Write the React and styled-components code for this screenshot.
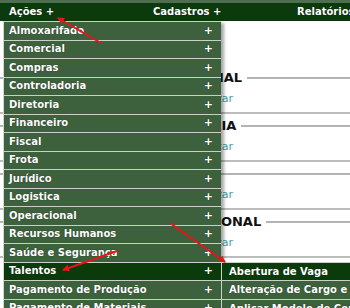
import styled, { createGlobalStyle } from "styled-components";

const GlobalStyle = createGlobalStyle`
  html, body {
    margin: 0;
    padding: 0;
    background: #ffffff;
  }
  body {
    width: 350px;
    height: 308px;
    overflow: hidden;
    font-family: "DejaVu Sans", Verdana, sans-serif;
  }
`;

const menuItems = [
  "Almoxarifado",
  "Comercial",
  "Compras",
  "Controladoria",
  "Diretoria",
  "Financeiro",
  "Fiscal",
  "Frota",
  "Jurídico",
  "Logistica",
  "Operacional",
  "Recursos Humanos",
  "Saúde e Segurança",
  "Talentos",
  "Pagamento de Produção",
  "Pagamento de Materiais",
];

const subItems = [
  "Abertura de Vaga",
  "Alteração de Cargo e Salário",
  "Aplicar Modelo de Competências",
];

const sections = ["COMERCIAL", "DIRETORIA", "FISCAL", "OPERACIONAL"];

const Page = styled.div`
  position: relative;
  width: 350px;
  height: 308px;
  overflow: hidden;
`;

const TopStrip = styled.div`
  height: 3px;
  background: #4f6d4f;
`;

const NavBar = styled.nav`
  display: flex;
  height: 18px;
  background: #0c3a0c;
`;

const NavItem = styled.div`
  position: relative;
  flex: 0 0 144px;
  padding-left: 9px;
  box-sizing: border-box;
  color: #ffffff;
  font-size: 10px;
  font-weight: bold;
  line-height: 18px;
  white-space: nowrap;
  text-shadow: 0 0 1px rgba(0, 0, 0, 0.6);
`;

const Dropdown = styled.ul`
  position: absolute;
  top: 18px;
  left: 3px;
  width: 217px;
  margin: 0;
  padding: 0;
  list-style: none;
  border-left: 1px solid #d3dad3;
  box-shadow: 3px 2px 3px rgba(0, 0, 0, 0.35);
  z-index: 2;
`;

const MenuRow = styled.li`
  position: relative;
  display: flex;
  justify-content: space-between;
  align-items: center;
  height: 18.5px;
  box-sizing: border-box;
  padding: 0 8px 0 5px;
  border-top: 1px solid #c9d0c9;
  background: ${(p) => (p.active ? "#0b3b0b" : "#3d603d")};
  color: #ffffff;
  font-size: 10px;
  font-weight: bold;
  white-space: nowrap;
  text-shadow: 0 0 1px rgba(0, 0, 0, 0.6);
`;

const Plus = styled.span`
  font-size: 11px;
`;

const Submenu = styled.ul`
  position: absolute;
  top: -1px;
  left: 100%;
  width: 160px;
  margin: 0;
  padding: 0;
  list-style: none;
  border-left: 1px solid #c9d0c9;
  z-index: 3;
`;

const SubRow = styled.li`
  height: 18.5px;
  box-sizing: border-box;
  padding-left: 7px;
  border-top: 1px solid #c9d0c9;
  background: ${(p) => (p.active ? "#0b3b0b" : "#3d603d")};
  color: #ffffff;
  font-size: 10px;
  font-weight: bold;
  line-height: 17px;
  white-space: nowrap;
  overflow: hidden;
  text-shadow: 0 0 1px rgba(0, 0, 0, 0.6);
`;

const Content = styled.main`
  display: flex;
  flex-direction: column;
  padding-top: 50px;
`;

const Section = styled.section`
  display: flex;
  flex-direction: column;
`;

const HeadingRow = styled.div`
  display: flex;
  align-items: center;
  height: 14px;
`;

const Rule = styled.div`
  height: 2px;
  background: #b4b4b4;
  flex: ${(p) => (p.grow ? "1" : "0 0 150px")};
`;

const Heading = styled.h3`
  margin: 0 5px 0 7px;
  font-size: 13px;
  font-weight: bold;
  color: #111111;
  line-height: 14px;
`;

const Link = styled.a`
  display: block;
  margin-top: 7px;
  padding-left: 180px;
  height: 14px;
  line-height: 14px;
  font-size: 11px;
  color: #4a9ca6;
  text-decoration: none;
`;

const Divider = styled.hr`
  margin: 6px 0 5px;
  border: none;
  height: 2px;
  background: #bdbdbd;
`;

const Annotations = styled.svg`
  position: absolute;
  inset: 0;
  pointer-events: none;
  z-index: 5;
`;

const arrows = [
  [101, 43, 58, 18],
  [117, 251, 63, 270],
  [170, 223, 225, 262],
];

const App = () => {
  return (
    <Page>
      <GlobalStyle />
      <TopStrip />
      <NavBar>
        <NavItem>
          Ações +
          <Dropdown>
            {menuItems.map((item) => (
              <MenuRow key={item} active={item === "Talentos"}>
                <span>{item}</span>
                <Plus>+</Plus>
                {item === "Talentos" && (
                  <Submenu>
                    {subItems.map((sub, i) => (
                      <SubRow key={sub} active={i === 0}>
                        {sub}
                      </SubRow>
                    ))}
                  </Submenu>
                )}
              </MenuRow>
            ))}
          </Dropdown>
        </NavItem>
        <NavItem>Cadastros +</NavItem>
        <NavItem>Relatórios +</NavItem>
      </NavBar>

      <Content>
        {sections.map((name) => (
          <Section key={name}>
            <HeadingRow>
              <Rule />
              <Heading>{name}</Heading>
              <Rule grow />
            </HeadingRow>
            <Link href="#">Visualizar</Link>
            <Divider />
          </Section>
        ))}
      </Content>

      <Annotations width="350" height="308" viewBox="0 0 350 308">
        <defs>
          <marker
            id="head"
            markerWidth="8"
            markerHeight="8"
            refX="6"
            refY="4"
            orient="auto"
            markerUnits="userSpaceOnUse"
          >
            <path d="M0,0.5 L7,4 L0,7.5 Z" fill="#e8141a" />
          </marker>
        </defs>
        {arrows.map(([x1, y1, x2, y2], i) => (
          <line
            key={i}
            x1={x1}
            y1={y1}
            x2={x2}
            y2={y2}
            stroke="#e8141a"
            strokeWidth="2"
            markerEnd="url(#head)"
          />
        ))}
      </Annotations>
    </Page>
  );
};

export default App;
